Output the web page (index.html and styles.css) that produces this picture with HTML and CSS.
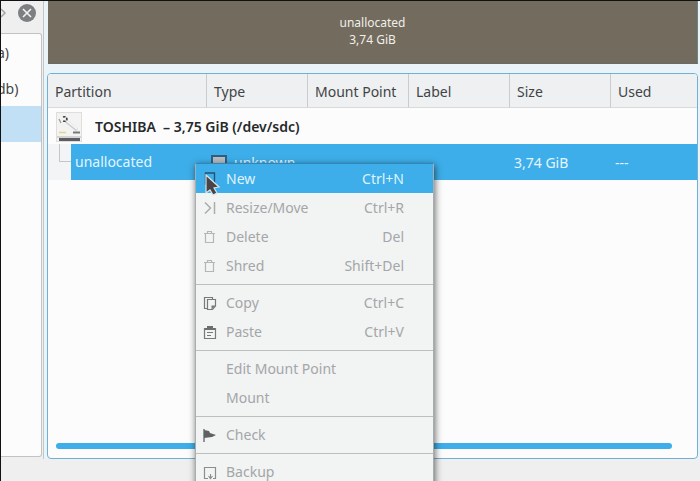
FILE: index.html
```
<!DOCTYPE html>
<html lang="en">
<head>
  <meta charset="UTF-8">
  <meta name="viewport" content="width=device-width, initial-scale=1.0">
  <title>Partition Manager</title>
  <link rel="stylesheet" href="styles.css">
</head>
<body>

<aside class="devices">
  <div class="dock-title">
    <svg class="float-icon" width="6" height="14" viewBox="0 0 6 14"><path d="M0 3 L4 7 L0 11" fill="none" stroke="#a5a5a5" stroke-width="1.5"/></svg>
    <button class="dock-close" aria-label="Close panel">
      <svg width="18" height="18" viewBox="0 0 18 18"><circle cx="9" cy="9" r="9" fill="#7d7f80"/><path d="M5 5 L13 13 M13 5 L5 13" stroke="#f4f4f4" stroke-width="1.6"/></svg>
    </button>
  </div>
  <ul class="device-list">
    <li>a)</li>
    <li>db)</li>
    <li class="current"></li>
  </ul>
</aside>

<main class="main">
  <div class="disk-bar">
    <span>unallocated</span>
    <span>3,74 GiB</span>
  </div>

  <div class="tree">
    <table class="partitions">
      <thead>
        <tr>
          <th class="col-partition">Partition</th>
          <th class="col">Type</th>
          <th class="col">Mount Point</th>
          <th class="col">Label</th>
          <th class="col">Size</th>
          <th>Used</th>
        </tr>
      </thead>
      <tbody>
        <tr class="disk">
          <td colspan="6">
            <div class="disk-name">
              <svg width="26" height="30" viewBox="0 0 26 30">
                <rect x="0.5" y="0.5" width="25" height="29" fill="#f3f3f2" stroke="#dedede"/>
                <path d="M10 9 L21 18" stroke="#cfd1d2" stroke-width="3.5"/>
                <path d="M11 9 L21 17" stroke="#fafafa" stroke-width="1.5"/>
                <path d="M7 5 Q10 4 11 7 Q10 10 7 9" fill="none" stroke="#3c3f42" stroke-width="1.6" stroke-dasharray="2.5 1.2"/>
                <path d="M3 7 L5 11" stroke="#999" stroke-width="1.3"/>
                <path d="M3 20.5 H10" stroke="#e3d491" stroke-width="1.5"/>
                <path d="M17 20.5 H24" stroke="#77797b" stroke-width="2"/>
                <rect x="1" y="24" width="24" height="2" fill="#d4d4d4"/>
                <rect x="3" y="26" width="21" height="3" fill="#5b5d5f"/>
              </svg>
              <span>TOSHIBA&nbsp; – 3,75 GiB (/dev/sdc)</span>
            </div>
          </td>
        </tr>
        <tr class="selected">
          <td class="first"><div class="child"><i class="branch"></i>unallocated</div></td>
          <td><div class="fs-type"><i class="swatch"></i>unknown</div></td>
          <td></td>
          <td></td>
          <td>3,74 GiB</td>
          <td>---</td>
        </tr>
      </tbody>
    </table>
    <div class="scrollbar"></div>
  </div>
</main>

<div class="menu" role="menu">
  <button class="item active" role="menuitem">
    <svg width="16" height="16" viewBox="0 0 16 16"><path d="M3.5 2 H12.5 V13 H3.5 Z" fill="none" stroke="#25506e" stroke-width="1.3"/></svg>
    <span>New</span><kbd>Ctrl+N</kbd>
  </button>
  <button class="item" role="menuitem" disabled>
    <svg width="16" height="16" viewBox="0 0 16 16"><path d="M3 2.5 L8.5 8 L3 13.5 M12.5 2 V14" fill="none" stroke="#aaacad" stroke-width="1.5"/></svg>
    <span>Resize/Move</span><kbd>Ctrl+R</kbd>
  </button>
  <button class="item" role="menuitem" disabled>
    <svg width="16" height="16" viewBox="0 0 16 16"><path d="M2 4.5 H13 M5.5 4 V2.5 H9.5 V4 M3.5 5 V13.5 H11.5 V5" fill="none" stroke="#b3b5b6" stroke-width="1.2"/></svg>
    <span>Delete</span><kbd>Del</kbd>
  </button>
  <button class="item" role="menuitem" disabled>
    <svg width="16" height="16" viewBox="0 0 16 16"><path d="M2 4.5 H13 M5.5 4 V2.5 H9.5 V4 M3.5 5 V13.5 H11.5 V5" fill="none" stroke="#b3b5b6" stroke-width="1.2"/></svg>
    <span>Shred</span><kbd>Shift+Del</kbd>
  </button>
  <hr>
  <button class="item" role="menuitem" disabled>
    <svg width="16" height="16" viewBox="0 0 16 16"><path d="M5 13.5 H2.5 V2.5 H10.5 V4" fill="none" stroke="#77797b" stroke-width="1.2"/><path d="M5.5 4.5 H13.5 V11 L10.5 14.5 H5.5 Z" fill="none" stroke="#77797b" stroke-width="1.2"/><path d="M9.5 14.5 V10.500 H13.5 Z" fill="#77797b"/></svg>
    <span>Copy</span><kbd>Ctrl+C</kbd>
  </button>
  <button class="item" role="menuitem" disabled>
    <svg width="16" height="16" viewBox="0 0 16 16"><path d="M2.5 4.5 H13.5 V14.5 H2.5 Z" fill="none" stroke="#77797b" stroke-width="1.2"/><path d="M3 4 H5 V2 H11 V4 H13 V6 H3 Z" fill="#6c6e70"/><path d="M5 8.5 H11 M5 11.5 H9" stroke="#77797b" stroke-width="1.1"/></svg>
    <span>Paste</span><kbd>Ctrl+V</kbd>
  </button>
  <hr>
  <button class="item" role="menuitem" disabled>
    <svg width="16" height="16"></svg>
    <span>Edit Mount Point</span>
  </button>
  <button class="item" role="menuitem" disabled>
    <svg width="16" height="16"></svg>
    <span>Mount</span>
  </button>
  <hr>
  <button class="item" role="menuitem" disabled>
    <svg width="16" height="16" viewBox="0 0 16 16"><path d="M2 2 V15" stroke="#5f6163" stroke-width="1.3"/><path d="M2 3 L7 4 L8 6 L14 8 L10 10 L2 11 Z" fill="#5f6163"/></svg>
    <span>Check</span>
  </button>
  <hr>
  <button class="item" role="menuitem" disabled>
    <svg width="16" height="16" viewBox="0 0 16 16"><path d="M6 14.5 H2.5 V3.5 H13.5 V14.5 H11" fill="none" stroke="#8b8d8f" stroke-width="1.2"/><path d="M8.5 10 V14 M6.5 12 L8.5 14.500 L10.5 12" fill="none" stroke="#8b8d8f" stroke-width="1.1"/></svg>
    <span>Backup</span>
  </button>
</div>

<svg class="cursor" width="17" height="25" viewBox="0 0 17 25"><path d="M2 2 L15 14 L10 15 L13 20 L9 22 L6 17 L2 20 Z" fill="#4a4446" stroke="#d5e4ec" stroke-width="1.2"/></svg>

</body>
</html>
```

FILE: styles.css
```
* {
  margin: 0;
  padding: 0;
  box-sizing: border-box;
}

body {
  position: relative;
  display: flex;
  height: 100vh;
  overflow: hidden;
  padding-bottom: 22px;
  background: #efefef;
  border-top: 1px solid #111;
  border-left: 1px solid #111;
  font-family: "Noto Sans", sans-serif;
  font-size: 14px;
  line-height: 18px;
  color: #414446;
}

button {
  border: none;
  background: none;
  font: inherit;
  color: inherit;
}

/* devices dock */
.devices {
  display: flex;
  flex-direction: column;
  width: 43px;
  padding-bottom: 2px;
  border-right: 1px solid #c3c5c6;
}

.dock-title {
  display: flex;
  align-items: center;
  justify-content: space-between;
  height: 32px;
  padding: 0 7px 8px 0;
}

.dock-close {
  width: 18px;
  height: 18px;
}

.dock-close svg {
  display: block;
}

.device-list {
  flex: 1;
  margin-right: 1px;
  list-style: none;
  overflow: hidden;
  background: #fcfcfc;
  border: 1px solid #c0c2c3;
  border-left: none;
  border-radius: 0 3px 3px 0;
}

.device-list li {
  height: 36px;
  line-height: 38px;
  margin-left: -4px;
}

.device-list .current {
  margin-left: 0;
  background: #c2e0f5;
}

/* main area */
.main {
  flex: 1;
  display: flex;
  flex-direction: column;
  gap: 9px;
  padding: 0 2px 0 3px;
  background: #e9f3f8;
}

.disk-bar {
  display: flex;
  flex-direction: column;
  align-items: center;
  justify-content: center;
  height: 63px;
  padding-bottom: 2px;
  margin-left: 1px;
  background: #736b5d;
  border-bottom: 1px solid #666b68;
  border-right: 1px solid #6a8585;
  color: #f0efec;
  font-size: 12px;
  line-height: 17px;
}

.tree {
  flex: 1;
  display: flex;
  flex-direction: column;
  justify-content: space-between;
  overflow: hidden;
  background: #fcfcfc;
  border: 1px solid #6fb0d4;
  border-radius: 4px;
}

.partitions {
  width: 100%;
  table-layout: fixed;
  border-collapse: separate;
  border-spacing: 0;
}

.partitions th {
  height: 34px;
  padding: 2px 7px 0;
  background: #eff0f1;
  border-right: 1px solid #c9cbcc;
  border-bottom: 1px solid #d8dadb;
  font-weight: 400;
  text-align: left;
  white-space: nowrap;
}

.partitions th:last-child {
  border-right: none;
}

.partitions .col-partition {
  width: 159px;
}

.partitions .col {
  width: 101px;
}

.partitions td {
  height: 36px;
  padding: 2px 4px 0;
}

.disk-name {
  display: flex;
  align-items: center;
  gap: 13px;
  padding-left: 4px;
  color: #26292b;
  font-weight: 600;
}

.selected td {
  background: #3daee9;
  color: #e4f5ff;
}

.selected .first {
  padding: 0;
  background: linear-gradient(90deg, #f3f4f5 23px, #3daee9 23px);
}

.child {
  display: flex;
  align-items: center;
  height: 36px;
  line-height: 20px;
}

.branch {
  align-self: flex-start;
  width: 12px;
  height: 18px;
  margin: 0 4px 0 11px;
  border-left: 1px solid #c4c6c8;
  border-bottom: 1px solid #c4c6c8;
}

.fs-type {
  display: flex;
  align-items: center;
  gap: 7px;
}

.swatch {
  width: 16px;
  height: 16px;
  background: #b9bcbe;
  border: 2px solid #2f5f80;
}

.scrollbar {
  height: 6px;
  margin: 0 25px 9px 8px;
  background: #3daee9;
  border-radius: 3px;
}

/* context menu */
.menu {
  position: absolute;
  top: 162px;
  left: 194px;
  width: 239px;
  background: #f2f3f3;
  border: 1px solid #a9adb0;
  border-top-color: #3186b8;
  box-shadow: 1px 2px 7px rgba(0, 0, 0, 0.6);
}

.item {
  display: flex;
  align-items: center;
  gap: 8px;
  width: 100%;
  height: 29px;
  padding: 0 29px 0 6px;
  color: #a4a6a8;
  text-align: left;
}

.item.active {
  background: #3daee9;
  color: #dff3ff;
}

.item kbd {
  margin-left: auto;
  font: inherit;
}

.menu hr {
  height: 8px;
  border: none;
  background: linear-gradient(#bcbebf, #bcbebf) center / 100% 1px no-repeat;
}

.cursor {
  position: absolute;
  top: 172px;
  left: 203px;
}
```
